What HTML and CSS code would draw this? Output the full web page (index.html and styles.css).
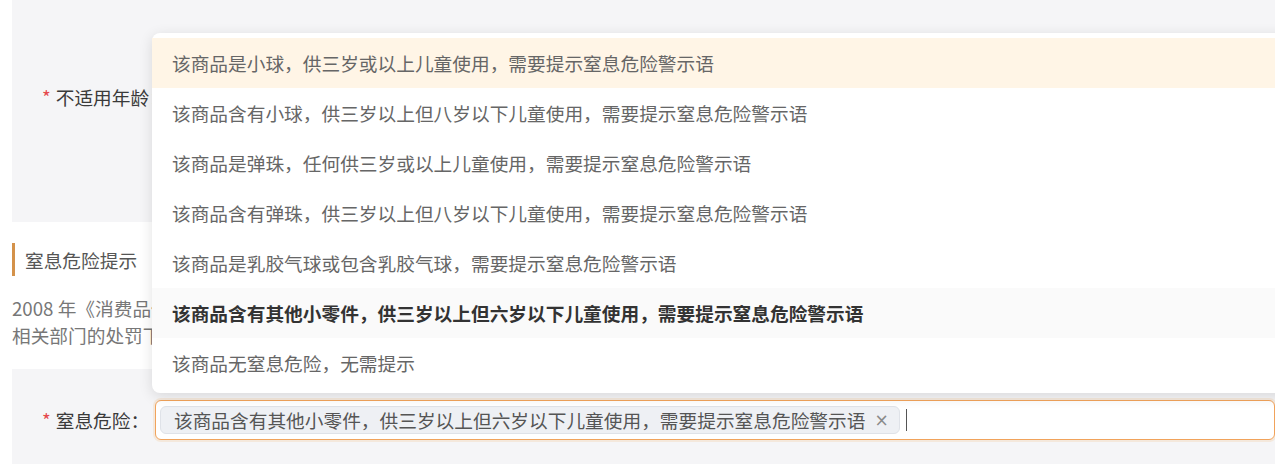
FILE: index.html
```html
<!DOCTYPE html>
<html lang="zh-CN">
<head>
<meta charset="utf-8">
<title>窒息危险</title>
<link rel="stylesheet" href="styles.css">
</head>
<body>
<div class="page">
  <section class="panel panel-top">
    <div class="form-row">
      <label class="label"><span class="req">*</span>不适用年龄：</label>
    </div>
  </section>

  <h3 class="section-title">窒息危险提示</h3>
  <p class="desc">2008 年《消费品使用说明 第 5 部分：玩具》规定，玩具商品需标注窒息危险警示语，未按规定标注的商品将受到<br>相关部门的处罚下架。</p>

  <section class="panel panel-bottom">
    <div class="form-row">
      <label class="label"><span class="req">*</span>窒息危险：</label>
      <div class="select">
        <span class="tag">该商品含有其他小零件，供三岁以上但六岁以下儿童使用，需要提示窒息危险警示语<span class="tag-close">×</span></span>
        <span class="cursor"></span>
      </div>
    </div>
  </section>

  <ul class="dropdown">
    <li class="item hover">该商品是小球，供三岁或以上儿童使用，需要提示窒息危险警示语</li>
    <li class="item">该商品含有小球，供三岁以上但八岁以下儿童使用，需要提示窒息危险警示语</li>
    <li class="item">该商品是弹珠，任何供三岁或以上儿童使用，需要提示窒息危险警示语</li>
    <li class="item">该商品含有弹珠，供三岁以上但八岁以下儿童使用，需要提示窒息危险警示语</li>
    <li class="item">该商品是乳胶气球或包含乳胶气球，需要提示窒息危险警示语</li>
    <li class="item selected">该商品含有其他小零件，供三岁以上但六岁以下儿童使用，需要提示窒息危险警示语</li>
    <li class="item">该商品无窒息危险，无需提示</li>
  </ul>
</div>
</body>
</html>
```

FILE: styles.css
```css
* { box-sizing: border-box; }
html, body {
  margin: 0;
  padding: 0;
  background: #ffffff;
  overflow: hidden;
}
body {
  width: 1275px;
  height: 465px;
  font-family: "Noto Sans CJK SC", "Noto Sans", sans-serif;
  font-size: 18.7px;
  color: #333;
}
.page {
  position: relative;
  height: 465px;
  overflow: hidden;
}
.panel {
  margin-left: 12px;
  background: #f5f5f7;
}
.panel-top {
  height: 222px;
  padding-top: 82px;
}
.panel-bottom {
  height: 95px;
  margin-top: 21px;
  padding-top: 31px;
}
.form-row {
  display: flex;
  align-items: center;
  white-space: nowrap;
}
.label {
  width: 143px;
  flex: 0 0 143px;
  padding-left: 30px;
  line-height: 30px;
  color: #3a3a3a;
  white-space: nowrap;
  overflow: visible;
}
.req {
  color: #e5484d;
  margin-right: 5px;
}
.select {
  flex: 1;
  height: 40px;
  border: 1.5px solid #f1a35b;
  border-radius: 6px;
  box-shadow: 0 0 0 2px rgba(245, 175, 100, 0.18);
  background: #fff;
  display: flex;
  align-items: center;
  padding-left: 4px;
  gap: 6px;
}
.tag {
  display: inline-flex;
  align-items: center;
  height: 28px;
  padding: 0 10px 0 13px;
  background: #eef0f4;
  border: 1px solid #dfe2e8;
  border-radius: 6px;
  color: #555;
  line-height: 26px;
}
.tag-close {
  margin-left: 9px;
  color: #8a8a8a;
  font-size: 17px;
  font-family: "DejaVu Sans", sans-serif;
}
.cursor {
  width: 1.5px;
  height: 22px;
  background: #555;
}
.section-title {
  margin: 21px 0 0 12px;
  padding-left: 10px;
  border-left: 3px solid #d4924a;
  font-size: 18.7px;
  font-weight: 400;
  line-height: 33px;
  color: #555;
}
.desc {
  margin: 18px 0 0 12px;
  width: 140px;
  overflow: hidden;
  font-size: 18.7px;
  line-height: 27px;
  color: #777;
  white-space: nowrap;
}
.dropdown {
  position: absolute;
  left: 152px;
  top: 33px;
  width: 1150px;
  margin: 0;
  padding: 5px 0;
  list-style: none;
  background: #fff;
  border-radius: 8px;
  box-shadow: 0 3px 14px rgba(0, 0, 0, 0.12);
}
.item {
  height: 50px;
  line-height: 50px;
  padding-left: 20px;
  color: #666;
  white-space: nowrap;
}
.item.hover {
  background: #fff5e6;
}
.item.selected {
  background: #fafafa;
  color: #333;
  font-weight: 700;
}
```
